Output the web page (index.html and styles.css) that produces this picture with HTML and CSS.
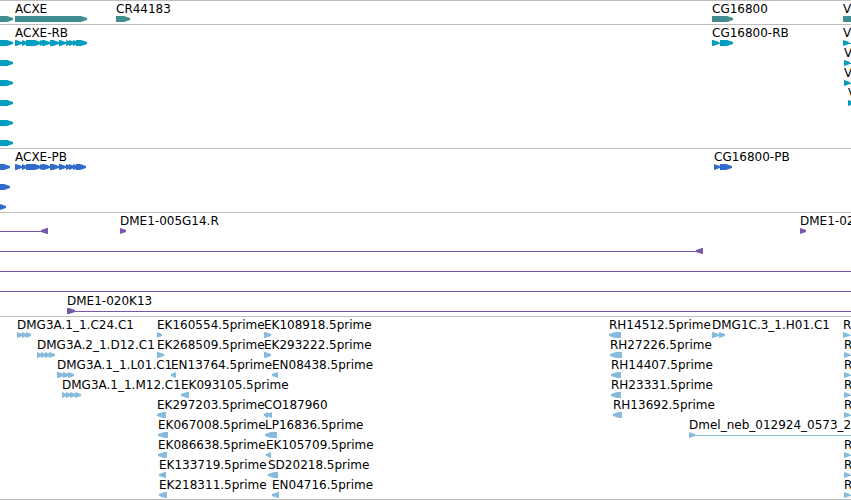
FILE: index.html
```
<!DOCTYPE html>
<html lang="en">
<head>
<meta charset="UTF-8">
<meta name="viewport" content="width=device-width, initial-scale=1.0">
<title>Genome Browser</title>
<link rel="stylesheet" href="styles.css">
</head>
<body>

<main class="browser" id="browser"></main>

<script src="tracks.js"></script>
</body>
</html>
```
FILE: styles.css
```
body {
    margin: 0;
    background-color: #fff;
    color: #000;
    font-family: "DejaVu Sans", sans-serif;
    font-size: 12px;
}
.browser {
    overflow: hidden;
    border-bottom: 1px solid #bebebe;
}
.track {
    border-top: 1px solid #bebebe;
    padding-bottom: 3px;
}
.track:last-child {
    padding-bottom: 2px;
}
.row {
    position: relative;
    height: 20px;
}
.feature {
    position: absolute;
    top: 0;
    display: flex;
    flex-direction: column;
}
.label {
    height: 15px;
    line-height: 17px;
    white-space: nowrap;
}
.glyph {
    display: block;
    height: 6px;
    fill: currentColor;
}
.gene .glyph {
    color: #408c8f;
}
.mrna .glyph {
    color: #009dbf;
}
.protein .glyph {
    color: #316bcb;
}
.bac .glyph {
    color: #7858a8;
}
.est .glyph {
    color: #87bbdd;
}
```
FILE: tracks.js
```
// feature: [start, label, parts, line end]
// part: [from, to] relative to the start, to < from points left
var exons = [[0, 7], [7, 12], [11, 26], [25, 29], [27, 35], [35, 44], [44, 51], [51, 56], [54, 59], [58, 63], [61, 72]];
var cds = exons.slice(0, 10).concat([[61, 71]]);

var tracks = [
    { type: "gene", rows: [
        [[0, "", [[0, 13]]], [15, "ACXE", [[0, 72]]], [116, "CR44183", [[0, 14]]], [712, "CG16800", [[0, 21]]], [843, "V", [[0, 60]]]]
    ] },
    { type: "mrna", rows: [
        [[0, "", [[0, 13]]], [15, "ACXE-RB", exons], [712, "CG16800-RB", [[0, 7], [8, 21]], 21], [843, "V", [[0, 6]], 60]],
        [[0, "", [[0, 13]]], [844, "V", [[0, 6]], 60]],
        [[0, "", [[0, 13]]], [844, "V", [[0, 6]], 60]],
        [[0, "", [[0, 13]]], [848, "V", [[0, 6]], 60]],
        [[0, "", [[0, 13]]]],
        [[0, "", [[0, 13]]]]
    ] },
    { type: "protein", rows: [
        [[0, "", [[0, 10]]], [15, "ACXE-PB", cds], [714, "CG16800-PB", [[0, 6], [6, 18]]]],
        [[0, "", [[0, 10]]]],
        [[0, "", [[0, 6]]]]
    ] },
    { type: "bac", rows: [
        [[0, "", [[48, 41]], 48], [120, "DME1-005G14.R", [[0, 6]]], [800, "DME1-02", [[0, 6]]]],
        [[0, "", [[703, 696]], 703]],
        [[0, "", [], 4000]],
        [[0, "", [], 4000]],
        [[67, "DME1-020K13", [[0, 8]], 4000]]
    ] },
    { type: "est", rows: [
        [[17, "DMG3A.1_1.C24.C1", [[0, 6], [5, 10], [9, 14]]], [157, "EK160554.5prime", [[0, 5]]], [264, "EK108918.5prime", [[0, 7]]],
         [609, "RH14512.5prime", [[12, 0]]], [712, "DMG1C.3_1.H01.C1", [[0, 7], [7, 13]], 13], [843, "R", [[0, 6]], 60]],
        [[37, "DMG3A.2_1.D12.C1", [[0, 5], [4, 9], [8, 13], [12, 18]]], [157, "EK268509.5prime", [[0, 7]]], [264, "EK293222.5prime", [[0, 7]]],
         [610, "RH27226.5prime", [[12, 0]]], [844, "R", [[0, 6]], 60]],
        [[57, "DMG3A.1_1.L01.C1", [[0, 7], [6, 12], [11, 17]]], [171, "EN13764.5prime", [[5, 0]]], [272, "EN08438.5prime", [[6, 0]]],
         [611, "RH14407.5prime", [[10, 0]]], [844, "R", [[0, 6]], 60]],
        [[62, "DMG3A.1_1.M12.C1", [[0, 5], [4, 9], [8, 14], [13, 19]]], [181, "EK093105.5prime", [[8, 0]]],
         [611, "RH23331.5prime", [[10, 0]]], [844, "R", [[0, 6]], 60]],
        [[157, "EK297203.5prime", [[9, 0]]], [264, "CO187960", [[4, 0], [8, 3]]], [613, "RH13692.5prime", [[9, 0]]], [844, "R", [[0, 6]], 60]],
        [[158, "EK067008.5prime", [[10, 0]]], [265, "LP16836.5prime", [[12, 0]]], [689, "Dmel_neb_012924_0573_2", [[0, 6]], 4000]],
        [[158, "EK086638.5prime", [[9, 0]]], [266, "EK105709.5prime", [[5, 0]]], [844, "R", [[0, 6]], 60]],
        [[159, "EK133719.5prime", [[7, 0]]], [268, "SD20218.5prime", [[10, 0]]], [844, "R", [[0, 6]], 60]],
        [[159, "EK218311.5prime", [[8, 0]]], [272, "EN04716.5prime", [[7, 0]]], [844, "R", [[0, 6]], 60]]
    ] }
];

function arrow(part) {
    var from = part[0], to = part[1];
    var dir = to > from ? 1 : -1;
    var neck = to - dir * Math.min(6, Math.abs(to - from));
    return '<polygon points="' + from + ',0 ' + neck + ',0 ' + to + ',2 ' + to + ',4 ' + neck + ',6 ' + from + ',6"/>';
}

function glyph(parts, lineEnd) {
    var width = lineEnd || 0;
    parts.forEach(function (p) { width = Math.max(width, p[0], p[1]); });
    var line = lineEnd || parts.length > 4 ? '<rect y="3" height="1" width="' + width + '"/>' : '';
    return '<svg class="glyph" width="' + width + '" height="6">' + line + parts.map(arrow).join('') + '</svg>';
}

document.getElementById("browser").innerHTML = tracks.map(function (track) {
    return '<section class="track ' + track.type + '">' + track.rows.map(function (row) {
        return '<div class="row">' + row.map(function (f) {
            return '<div class="feature" style="left: ' + f[0] + 'px"><span class="label">' + f[1] + '</span>' + glyph(f[2], f[3]) + '</div>';
        }).join('') + '</div>';
    }).join('') + '</section>';
}).join('');
```
